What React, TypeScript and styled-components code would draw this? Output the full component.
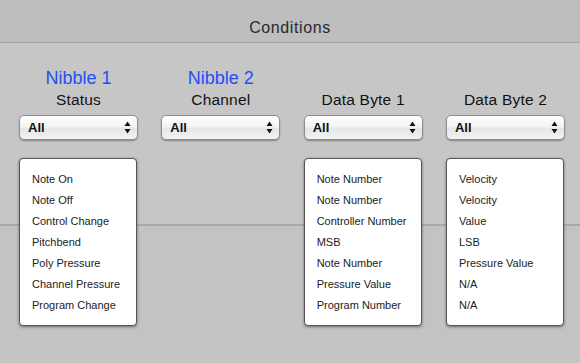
import styled, { createGlobalStyle } from 'styled-components'

const GlobalStyle = createGlobalStyle`
  html, body {
    margin: 0;
    padding: 0;
    background: #c5c5c5;
  }
  body {
    font-family: "Liberation Sans", Arial, Helvetica, sans-serif;
  }
`

const columns = [
  {
    nibble: 'Nibble 1',
    label: 'Status',
    items: [
      'Note On',
      'Note Off',
      'Control Change',
      'Pitchbend',
      'Poly Pressure',
      'Channel Pressure',
      'Program Change',
    ],
  },
  { nibble: 'Nibble 2', label: 'Channel', items: [] },
  {
    label: 'Data Byte 1',
    items: [
      'Note Number',
      'Note Number',
      'Controller Number',
      'MSB',
      'Note Number',
      'Pressure Value',
      'Program Number',
    ],
  },
  {
    label: 'Data Byte 2',
    items: [
      'Velocity',
      'Velocity',
      'Value',
      'LSB',
      'Pressure Value',
      'N/A',
      'N/A',
    ],
  },
]

function Stepper() {
  return (
    <svg width="7" height="13" viewBox="0 0 7 13">
      <path d="M3.5 0.5 L6.5 5 L0.5 5 Z" fill="#111" />
      <path d="M3.5 12.5 L6.5 8 L0.5 8 Z" fill="#111" />
    </svg>
  )
}

export default function App() {
  return (
    <Page>
      <GlobalStyle />
      <Header>
        <Title>Conditions</Title>
      </Header>
      <Body>
        {columns.map((col) => (
          <Column key={col.label}>
            <Heading>
              <Nibble>{col.nibble ?? ''}</Nibble>
              <Label>{col.label}</Label>
            </Heading>
            <Select>
              <span>All</span>
              <Stepper />
            </Select>
            {col.items.length > 0 && (
              <List>
                {col.items.map((item, i) => (
                  <Item key={i}>{item}</Item>
                ))}
              </List>
            )}
          </Column>
        ))}
      </Body>
    </Page>
  )
}

const Page = styled.div`
  width: 580px;
  height: 363px;
  overflow: hidden;
  display: flex;
  flex-direction: column;
`
const Header = styled.header`
  height: 42px;
  flex-shrink: 0;
  background: #bebebe;
  border-bottom: 1px solid #a4a4a4;
  display: flex;
  align-items: center;
  justify-content: center;
`
const Title = styled.h1`
  margin: 13px 0 0;
  font-size: 16px;
  font-weight: 400;
  color: #2a2a2a;
  letter-spacing: 0.6px;
`
const Body = styled.main`
  flex: 1;
  padding: 0 0 0 19px;
  display: grid;
  grid-template-columns: repeat(4, 119px);
  column-gap: 23.34px;
  align-items: start;
  background: linear-gradient(
    to bottom,
    #c6c6c6 0,
    #c6c6c6 181px,
    #a9a9a9 181px,
    #a9a9a9 183px,
    #c3c3c3 183px
  );
`
const Column = styled.section`
  display: flex;
  flex-direction: column;
`
const Heading = styled.div`
  padding-top: 24px;
  display: flex;
  flex-direction: column;
  align-items: center;
`
const Nibble = styled.div`
  height: 22px;
  line-height: 22px;
  font-size: 18px;
  color: #1f4ff7;
`
const Label = styled.div`
  margin-top: 1px;
  height: 20px;
  line-height: 20px;
  font-size: 15.5px;
  color: #111;
  letter-spacing: 0.2px;
`
const Select = styled.div`
  margin-top: 5px;
  box-sizing: border-box;
  height: 25px;
  border: 1px solid #8e8e8e;
  border-radius: 5px;
  background: linear-gradient(to bottom, #ffffff 0%, #f4f4f4 45%, #e6e6e6 55%, #f2f2f2 100%);
  box-shadow: 0 1px 1.5px rgba(0, 0, 0, 0.35);
  display: flex;
  align-items: center;
  justify-content: space-between;
  padding: 0 6px 0 8px;
  font-size: 13px;
  font-weight: 700;
  color: #111;
`
const List = styled.ul`
  margin: 18px 0 0;
  list-style: none;
  box-sizing: border-box;
  width: 118px;
  height: 168px;
  padding: 10px 0 0 12px;
  background: #fff;
  border: 1px solid #555;
  border-radius: 4px;
  box-shadow: 0 1px 3px rgba(0, 0, 0, 0.45);
`
const Item = styled.li`
  height: 21px;
  line-height: 21px;
  font-size: 11px;
  color: #222;
  white-space: nowrap;
`
